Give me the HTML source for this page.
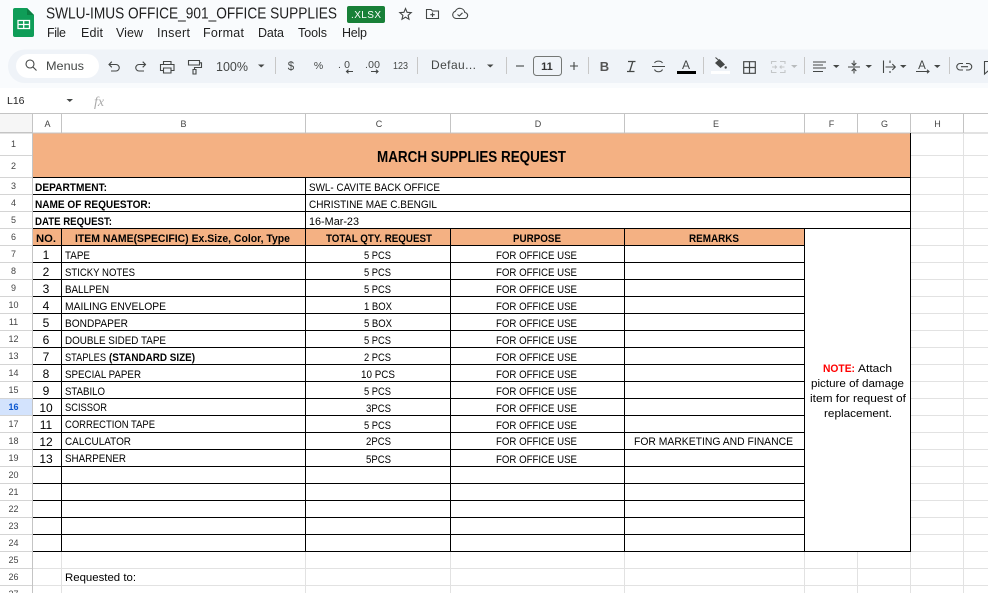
<!DOCTYPE html>
<html><head><meta charset="utf-8"><title>SWLU-IMUS OFFICE_901_OFFICE SUPPLIES</title>
<style>
html,body{margin:0;padding:0;background:#fff;overflow:hidden;width:988px;height:593px}
svg{display:block;font-family:"Liberation Sans",sans-serif}
.i{fill:none;stroke:#444746;stroke-width:1.1}
.f{fill:#444746}
.m{font-size:12.5px;fill:#1f1f1f}
.h{font-size:9px;fill:#444;text-anchor:middle}
.r{font-size:9px;fill:#444;text-anchor:middle}
.t{font-size:11px;fill:#000}
.b{font-size:11px;fill:#000;font-weight:bold}
.n{font-size:12px;fill:#000;text-anchor:middle}
.tb{font-size:12px;fill:#444746}
</style></head><body>
<svg width="988" height="593" viewBox="0 0 988 593" xmlns="http://www.w3.org/2000/svg">
<!-- chrome background -->
<rect width="988" height="88" fill="#f9fbfd"/>
<rect x="8" y="49.5" width="1000" height="33.5" rx="16.5" fill="#eff3f8"/>
<!-- sheets logo -->
<path d="M15 8H27L34 15V35a2 2 0 0 1-2 2H15a2 2 0 0 1-2-2V10a2 2 0 0 1 2-2z" fill="#0f9d58"/>
<path d="M27 8L34 15H27z" fill="#0b8043"/>
<path d="M18 20.500H29.500V28.500H18zM18 24.500H29.500M23.700 20.500V28.500" fill="none" stroke="#fff" stroke-width="1.300"/>
<!-- title -->
<text x="46" y="18.500" font-size="15.500" fill="#1f1f1f" textLength="291" lengthAdjust="spacingAndGlyphs">SWLU-IMUS OFFICE_901_OFFICE SUPPLIES</text>
<rect x="347" y="6" width="38" height="17" rx="2" fill="#188038"/>
<text x="366" y="18" font-size="10" fill="#fff" text-anchor="middle" textLength="30">.XLSX</text>
<!-- star folder cloud -->
<path d="M405.500 8.500L407.100 12.300 411.200 12.600 408.100 15.300 409 19.300 405.500 17.200 402 19.300 402.900 15.300 399.800 12.600 403.900 12.300z" class="i"/>
<path d="M426.500 9.500H431L432.500 11H438.500V18.500H426.500zM432.500 12.500V17M430.300 14.700H434.700" class="i"/>
<path d="M456 18.500H464.500a3 3 0 0 0 .3-6 5 5 0 0 0-9.500-1.200 3.700 3.700 0 0 0 .7 7.200zM457.500 14.500L459.300 16 462.500 12.800" class="i"/>
<!-- menus -->
<text class="m" x="47" y="37" textLength="19">File</text>
<text class="m" x="81" y="37" textLength="22">Edit</text>
<text class="m" x="116" y="37" textLength="27">View</text>
<text class="m" x="157" y="37" textLength="33">Insert</text>
<text class="m" x="203" y="37" textLength="41">Format</text>
<text class="m" x="258" y="37" textLength="26">Data</text>
<text class="m" x="298" y="37" textLength="29">Tools</text>
<text class="m" x="342" y="37" textLength="25">Help</text>
<!-- toolbar -->
<rect x="16" y="54" width="83" height="24" rx="12" fill="#fff"/>
<circle cx="30" cy="64" r="4" class="i"/><path d="M33 67L36.500 70.500" class="i"/>
<text x="46" y="70" class="tb" textLength="38" lengthAdjust="spacingAndGlyphs">Menus</text>
<path d="M109 64.500H116a3.200 3.200 0 0 1 0 6.500H111M111.800 61.700L109 64.500 111.800 67.300" class="i"/>
<path d="M145.500 64.500H139a3.200 3.200 0 0 0 0 6.500H144M142.700 61.700L145.500 64.500 142.700 67.300" class="i"/>
<path d="M163.500 64V61.500H171V64M163 70.500H160.500V64.500H174V70.500H171.500M163.500 68H171V73H163.500z" class="i"/>
<path d="M188.500 60.500H199.500V65H188.500zM199.500 62.800H201.500V67.500H194.500V69.500M193 69.500H196V74H193z" class="i"/>
<text x="216" y="71" font-size="12.500" fill="#444746" textLength="32">100%</text>
<path d="M258 64.500H264.500L261.250 67.500z" class="f"/>
<rect x="275" y="57" width="1" height="17" fill="#c7c7c7"/>
<text x="291" y="70" font-size="11.500" fill="#444746" text-anchor="middle">$</text>
<text x="318.500" y="69" font-size="10.500" fill="#444746" text-anchor="middle">%</text>
<text x="338" y="68" font-size="10.500" fill="#444746" textLength="12">.0</text>
<path d="M353 71.500H346.500M348.500 69.700L346.500 71.500 348.500 73.300" class="i"/>
<text x="365" y="68" font-size="10.500" fill="#444746" textLength="15">.00</text>
<path d="M371 71.500H378M376 69.700L378 71.500 376 73.300" class="i"/>
<text x="393" y="69" font-size="10.500" fill="#444746" textLength="15" lengthAdjust="spacingAndGlyphs">123</text>
<rect x="417" y="57" width="1" height="17" fill="#c7c7c7"/>
<text x="431" y="69" font-size="12" fill="#444746" textLength="45">Defau...</text>
<path d="M487 64.500H493.500L490.250 67.500z" class="f"/>
<rect x="506" y="57" width="1" height="17" fill="#c7c7c7"/>
<path d="M516 66H524" class="i"/>
<rect x="533.500" y="56.500" width="28" height="19" rx="3" fill="none" stroke="#747775"/>
<text x="547" y="70" font-size="11" font-weight="bold" fill="#333" text-anchor="middle">11</text>
<path d="M570 66H578M574 62V70" class="i"/>
<rect x="588" y="57" width="1" height="17" fill="#c7c7c7"/>
<text x="604.500" y="71" font-size="13" font-weight="bold" fill="#555" text-anchor="middle">B</text>
<path d="M628 61.500H635.500M627 71.500H634.500M632.800 61.500L629.700 71.500" fill="none" stroke="#444746" stroke-width="1.300"/>
<path d="M652 66.500H665M654.500 63C656 60.500 661 60.500 662.500 63M654.500 69.500C656 72.500 661 72.500 662.500 69.500" class="i"/>
<text x="686" y="69" font-size="12" fill="#444746" text-anchor="middle">A</text>
<rect x="677" y="71" width="19" height="3" fill="#000"/>
<rect x="703" y="57" width="1" height="17" fill="#c7c7c7"/>
<path d="M715 63L719.500 59 725 64.500 720.500 68z" class="f"/><path d="M715.500 57.500L719 60.500" class="i"/><circle cx="725.700" cy="67.500" r="1.200" class="f"/>
<rect x="711" y="71" width="19" height="3" fill="#fff"/>
<path d="M743.700 61.700H755.300V73.300H743.700zM743.700 67.500H755.300M749.500 61.700V73.300" fill="none" stroke="#444746" stroke-width="1.200"/>
<path d="M771.500 64V61.500H776.500M780 61.500H785V64M771.500 70V72.500H776.500M780 72.500H785V70M772 67H776M775 65.500L776.500 67 775 68.500M784.500 67H780.500M781.500 65.500L780 67 781.500 68.500" fill="none" stroke="#c4c7c9" stroke-width="1.100"/>
<path d="M791 65H797.500L794.250 68z" fill="#b8bbbd"/>
<rect x="804" y="57" width="1" height="17" fill="#c7c7c7"/>
<path d="M813 62H826M813 65H823M813 68H826M813 71.500H823" class="i"/>
<path d="M833 65H839.500L836.250 68z" class="f"/>
<path d="M848 67H860M854 60.500V65M851.700 63L854 65.500 856.300 63M854 73.500V69M851.700 71L854 68.500 856.300 71" class="i"/>
<path d="M865.500 65H872L868.750 68z" class="f"/>
<path d="M883.500 60.500V73M890 60.500V63M890 71V73M885.500 67H895M892.300 64L895.300 67 892.300 70" class="i"/>
<path d="M900 65H906.500L903.250 68z" class="f"/>
<text x="922" y="69" font-size="11.500" fill="#444746" text-anchor="middle">A</text>
<path d="M916 71.500H929M927 69.800L929 71.500 927 73.200" class="i"/>
<path d="M934 65H940.500L937.250 68z" class="f"/>
<rect x="949" y="57" width="1" height="17" fill="#c7c7c7"/>
<path d="M963 63.500H960a3 3 0 0 0 0 6.500H963M966 63.500H968.500a3 3 0 0 1 0 6.500H966M961 66.700H968" class="i"/>
<path d="M984.500 61.500H992V71H988L984.500 74z" class="i"/>
<!-- formula bar -->
<text x="7" y="104" font-size="10.500" fill="#1f1f1f">L16</text>
<path d="M66.500 99H73L69.750 102z" class="f"/>
<text x="94" y="106" font-size="14" font-style="italic" font-family="Liberation Serif" fill="#aaa">fx</text>
<!-- column headers -->
<rect x="0" y="114" width="32" height="19" fill="#f6f6f6"/>
<rect y="113" width="988" height="1" fill="#c4c4c4"/>
<path d="M61.500 114V133M305.500 114V133M450.500 114V133M624.500 114V133M804.500 114V133M857.500 114V133M910.500 114V133M963.500 114V133" stroke="#c4c4c4" fill="none"/>
<rect x="32" y="113" width="1" height="480" fill="#c4c4c4"/>
<rect x="0" y="132" width="32" height="1.500" fill="#c4c4c4"/>
<rect x="33" y="132.500" width="878" height="1" fill="#c4c4c4"/>
<rect x="911" y="132.500" width="77" height="1" fill="#c4c4c4"/>
<g>
<text class="h" x="47.500" y="127">A</text><text class="h" x="183.500" y="127">B</text><text class="h" x="379" y="127">C</text><text class="h" x="538" y="127">D</text><text class="h" x="716" y="127">E</text><text class="h" x="831.500" y="127">F</text><text class="h" x="884.500" y="127">G</text><text class="h" x="937.500" y="127">H</text>
</g>
<!-- row headers -->
<rect x="0" y="399" width="32" height="16" fill="#d3e3fd"/>
<path d="M0 155.500H32M0 177.500H32M0 194.500H32M0 211.500H32M0 228.500H32M0 245.500H32M0 262.500H32M0 279.500H32M0 296.500H32M0 313.500H32M0 330.500H32M0 347.500H32M0 364.500H32M0 381.500H32M0 398.500H32M0 415.500H32M0 432.500H32M0 449.500H32M0 466.500H32M0 483.500H32M0 500.500H32M0 517.500H32M0 534.500H32M0 551.500H32M0 568.500H32M0 585.500H32" stroke="#d4d4d4" fill="none"/>
<g>
<text class="r" x="13.500" y="147">1</text><text class="r" x="13.500" y="169">2</text><text class="r" x="13.500" y="189">3</text><text class="r" x="13.500" y="206">4</text><text class="r" x="13.500" y="223">5</text><text class="r" x="13.500" y="240">6</text><text class="r" x="13.500" y="257">7</text><text class="r" x="13.500" y="274">8</text><text class="r" x="13.500" y="291">9</text><text class="r" x="13.500" y="308">10</text><text class="r" x="13.500" y="325">11</text><text class="r" x="13.500" y="342">12</text><text class="r" x="13.500" y="359">13</text><text class="r" x="13.500" y="376">14</text><text class="r" x="13.500" y="393">15</text><text class="r" x="13.500" y="410" font-weight="bold" style="fill:#0b57d0">16</text><text class="r" x="13.500" y="427">17</text><text class="r" x="13.500" y="444">18</text><text class="r" x="13.500" y="461">19</text><text class="r" x="13.500" y="478">20</text><text class="r" x="13.500" y="495">21</text><text class="r" x="13.500" y="512">22</text><text class="r" x="13.500" y="529">23</text><text class="r" x="13.500" y="546">24</text><text class="r" x="13.500" y="563">25</text><text class="r" x="13.500" y="580">26</text><text class="r" x="13.500" y="597">27</text>
</g>
<!-- light grid -->
<path d="M911 155.500H988M911 177.500H988M911 194.500H988M911 211.500H988M911 228.500H988M911 245.500H988M911 262.500H988M911 279.500H988M911 296.500H988M911 313.500H988M911 330.500H988M911 347.500H988M911 364.500H988M911 381.500H988M911 398.500H988M911 415.500H988M911 432.500H988M911 449.500H988M911 466.500H988M911 483.500H988M911 500.500H988M911 517.500H988M911 534.500H988M911 551.500H988M33 568.500H988M33 585.500H988M963.500 133V593M61.500 552V593M305.500 552V593M450.500 552V593M624.500 552V593M804.500 552V593M857.500 552V593M910.500 552V593" stroke="#e2e2e2" fill="none"/>
<!-- orange fills -->
<rect x="33" y="133.500" width="877" height="43.500" fill="#f4b183"/>
<rect x="33" y="229" width="771" height="16" fill="#f4b183"/>
<!-- black borders -->
<g fill="#000" shape-rendering="crispEdges">
<rect x="33" y="177" width="878" height="1"/><rect x="33" y="194" width="878" height="1"/><rect x="33" y="211" width="878" height="1"/><rect x="33" y="228" width="878" height="1"/>
<rect x="33" y="245" width="771" height="1"/><rect x="33" y="262" width="771" height="1"/><rect x="33" y="279" width="771" height="1"/><rect x="33" y="296" width="771" height="1"/><rect x="33" y="313" width="771" height="1"/><rect x="33" y="330" width="771" height="1"/><rect x="33" y="347" width="771" height="1"/><rect x="33" y="364" width="771" height="1"/><rect x="33" y="381" width="771" height="1"/><rect x="33" y="398" width="771" height="1"/><rect x="33" y="415" width="771" height="1"/><rect x="33" y="432" width="771" height="1"/><rect x="33" y="449" width="771" height="1"/><rect x="33" y="466" width="771" height="1"/><rect x="33" y="483" width="771" height="1"/><rect x="33" y="500" width="771" height="1"/><rect x="33" y="517" width="771" height="1"/><rect x="33" y="534" width="771" height="1"/>
<rect x="33" y="551" width="878" height="1"/>
<rect x="61" y="228" width="1" height="324"/><rect x="305" y="177" width="1" height="375"/><rect x="450" y="228" width="1" height="324"/><rect x="624" y="228" width="1" height="324"/><rect x="804" y="228" width="1" height="324"/><rect x="910" y="133" width="1" height="419"/>
</g>
<!-- sheet text -->
<text x="377" y="162" font-size="16" font-weight="bold" fill="#000" textLength="189" lengthAdjust="spacingAndGlyphs">MARCH SUPPLIES REQUEST</text>
<text class="b" x="35" y="191" textLength="72" lengthAdjust="spacingAndGlyphs">DEPARTMENT:</text>
<text class="b" x="35" y="208" textLength="116" lengthAdjust="spacingAndGlyphs">NAME OF REQUESTOR:</text>
<text class="b" x="35" y="225" textLength="77" lengthAdjust="spacingAndGlyphs">DATE REQUEST:</text>
<text class="t" x="309" y="191" textLength="131" lengthAdjust="spacingAndGlyphs">SWL- CAVITE BACK OFFICE</text>
<text class="t" x="309" y="208" textLength="128" lengthAdjust="spacingAndGlyphs">CHRISTINE MAE C.BENGIL</text>
<text class="t" x="309" y="225" textLength="50" lengthAdjust="spacingAndGlyphs">16-Mar-23</text>
<text class="b" x="36" y="242" textLength="20" lengthAdjust="spacingAndGlyphs">NO.</text>
<text class="b" x="75" y="242" textLength="215" lengthAdjust="spacingAndGlyphs">ITEM NAME(SPECIFIC) Ex.Size, Color, Type</text>
<text class="b" x="326" y="242" textLength="106" lengthAdjust="spacingAndGlyphs">TOTAL QTY. REQUEST</text>
<text class="b" x="513" y="242" textLength="48" lengthAdjust="spacingAndGlyphs">PURPOSE</text>
<text class="b" x="689" y="242" textLength="50" lengthAdjust="spacingAndGlyphs">REMARKS</text>
<g>
<text class="n" x="46" y="259">1</text><text class="n" x="46" y="276">2</text><text class="n" x="46" y="293">3</text><text class="n" x="46" y="310">4</text><text class="n" x="46" y="327">5</text><text class="n" x="46" y="344">6</text><text class="n" x="46" y="361">7</text><text class="n" x="46" y="378">8</text><text class="n" x="46" y="395">9</text><text class="n" x="46" y="412">10</text><text class="n" x="46" y="429">11</text><text class="n" x="46" y="446">12</text><text class="n" x="46" y="463">13</text>
</g>
<text class="t" x="65" y="259" textLength="25" lengthAdjust="spacingAndGlyphs">TAPE</text>
<text class="t" x="65" y="276" textLength="70" lengthAdjust="spacingAndGlyphs">STICKY NOTES</text>
<text class="t" x="65" y="293" textLength="44" lengthAdjust="spacingAndGlyphs">BALLPEN</text>
<text class="t" x="65" y="310" textLength="101" lengthAdjust="spacingAndGlyphs">MAILING ENVELOPE</text>
<text class="t" x="65" y="327" textLength="63" lengthAdjust="spacingAndGlyphs">BONDPAPER</text>
<text class="t" x="65" y="344" textLength="101" lengthAdjust="spacingAndGlyphs">DOUBLE SIDED TAPE</text>
<text class="t" x="65" y="361" textLength="41" lengthAdjust="spacingAndGlyphs">STAPLES</text>
<text class="b" x="109" y="361" textLength="86" lengthAdjust="spacingAndGlyphs">(STANDARD SIZE)</text>
<text class="t" x="65" y="378" textLength="76" lengthAdjust="spacingAndGlyphs">SPECIAL PAPER</text>
<text class="t" x="65" y="395" textLength="40" lengthAdjust="spacingAndGlyphs">STABILO</text>
<text class="t" x="65" y="411" textLength="42" lengthAdjust="spacingAndGlyphs">SCISSOR</text>
<text class="t" x="65" y="428" textLength="90" lengthAdjust="spacingAndGlyphs">CORRECTION TAPE</text>
<text class="t" x="65" y="445" textLength="66" lengthAdjust="spacingAndGlyphs">CALCULATOR</text>
<text class="t" x="65" y="462" textLength="61" lengthAdjust="spacingAndGlyphs">SHARPENER</text>
<g>
<text class="t" x="364" y="259" textLength="27" lengthAdjust="spacingAndGlyphs">5 PCS</text>
<text class="t" x="364" y="276" textLength="27" lengthAdjust="spacingAndGlyphs">5 PCS</text>
<text class="t" x="364" y="293" textLength="27" lengthAdjust="spacingAndGlyphs">5 PCS</text>
<text class="t" x="364" y="310" textLength="28" lengthAdjust="spacingAndGlyphs">1 BOX</text>
<text class="t" x="364" y="327" textLength="28" lengthAdjust="spacingAndGlyphs">5 BOX</text>
<text class="t" x="364" y="344" textLength="27" lengthAdjust="spacingAndGlyphs">5 PCS</text>
<text class="t" x="364" y="361" textLength="27" lengthAdjust="spacingAndGlyphs">2 PCS</text>
<text class="t" x="361" y="378" textLength="34" lengthAdjust="spacingAndGlyphs">10 PCS</text>
<text class="t" x="364" y="395" textLength="27" lengthAdjust="spacingAndGlyphs">5 PCS</text>
<text class="t" x="366" y="412" textLength="25" lengthAdjust="spacingAndGlyphs">3PCS</text>
<text class="t" x="364" y="429" textLength="27" lengthAdjust="spacingAndGlyphs">5 PCS</text>
<text class="t" x="366" y="445" textLength="25" lengthAdjust="spacingAndGlyphs">2PCS</text>
<text class="t" x="366" y="463" textLength="25" lengthAdjust="spacingAndGlyphs">5PCS</text>
</g>
<g>
<text class="t" x="496" y="259" textLength="81" lengthAdjust="spacingAndGlyphs">FOR OFFICE USE</text>
<text class="t" x="496" y="276" textLength="81" lengthAdjust="spacingAndGlyphs">FOR OFFICE USE</text>
<text class="t" x="496" y="293" textLength="81" lengthAdjust="spacingAndGlyphs">FOR OFFICE USE</text>
<text class="t" x="496" y="310" textLength="81" lengthAdjust="spacingAndGlyphs">FOR OFFICE USE</text>
<text class="t" x="496" y="327" textLength="81" lengthAdjust="spacingAndGlyphs">FOR OFFICE USE</text>
<text class="t" x="496" y="344" textLength="81" lengthAdjust="spacingAndGlyphs">FOR OFFICE USE</text>
<text class="t" x="496" y="361" textLength="81" lengthAdjust="spacingAndGlyphs">FOR OFFICE USE</text>
<text class="t" x="496" y="378" textLength="81" lengthAdjust="spacingAndGlyphs">FOR OFFICE USE</text>
<text class="t" x="496" y="395" textLength="81" lengthAdjust="spacingAndGlyphs">FOR OFFICE USE</text>
<text class="t" x="496" y="412" textLength="81" lengthAdjust="spacingAndGlyphs">FOR OFFICE USE</text>
<text class="t" x="496" y="429" textLength="81" lengthAdjust="spacingAndGlyphs">FOR OFFICE USE</text>
<text class="t" x="496" y="445" textLength="81" lengthAdjust="spacingAndGlyphs">FOR OFFICE USE</text>
<text class="t" x="496" y="463" textLength="81" lengthAdjust="spacingAndGlyphs">FOR OFFICE USE</text>
</g>
<text class="t" x="634" y="445" textLength="159" lengthAdjust="spacingAndGlyphs">FOR MARKETING AND FINANCE</text>
<text class="b" x="823" y="372" style="fill:#f00" textLength="32" lengthAdjust="spacingAndGlyphs">NOTE:</text>
<text class="t" x="858" y="372" textLength="34" lengthAdjust="spacingAndGlyphs">Attach</text>
<text class="t" x="811" y="387" textLength="93" lengthAdjust="spacingAndGlyphs">picture of damage</text>
<text class="t" x="810" y="402" textLength="96" lengthAdjust="spacingAndGlyphs">item for request of</text>
<text class="t" x="824" y="417" textLength="68" lengthAdjust="spacingAndGlyphs">replacement.</text>
<text class="t" x="65" y="581" textLength="71" lengthAdjust="spacingAndGlyphs">Requested to:</text>
</svg>
</body></html>
